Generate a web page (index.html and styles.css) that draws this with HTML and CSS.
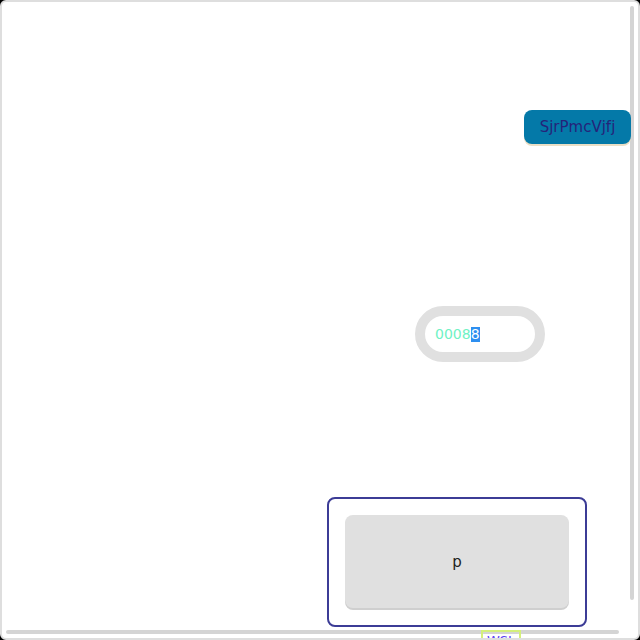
FILE: index.html
```html
<!DOCTYPE html>
<html>
<head>
<meta charset="utf-8">
<link rel="stylesheet" href="styles.css">
</head>
<body>
<div class="frame">
  <div class="bar bar-v"></div>
  <div class="bar bar-h"></div>
  <div class="content">
    <button class="action">SjrPmcVjfj</button>
    <div class="pill"><span class="val">0008</span><span class="sel">8</span></div>
    <div class="panel">
      <div class="tile">p</div>
    </div>
    <div class="tag">WSL</div>
  </div>
</div>
</body>
</html>
```
FILE: styles.css
```css
html, body {
  margin: 0;
  padding: 0;
  background: #000;
}
.frame {
  position: relative;
  box-sizing: border-box;
  width: 640px;
  height: 640px;
  border: 2px solid #dedede;
  border-radius: 6px;
  background: #fff;
  overflow: hidden;
}
.bar {
  position: absolute;
  background: #d4d4d4;
  border-radius: 2px;
}
.bar-v {
  left: 628px;
  top: 4px;
  width: 4px;
  height: 594px;
}
.bar-h {
  left: 4px;
  top: 628px;
  width: 613px;
  height: 4px;
}
.content {
  position: relative;
  z-index: 1;
  width: 628px;
  display: flex;
  flex-direction: column;
  align-items: flex-start;
}
.action {
  margin: 108px 0 0 522px;
  height: 34px;
  width: 107px;
  padding: 0;
  border: none;
  border-radius: 8px;
  background: #0479a8;
  color: #24247a;
  font-family: "DejaVu Sans", sans-serif;
  font-size: 15px;
  font-weight: 400;
  box-shadow: 0 2px 0 #eadfc6;
}
.pill {
  margin: 162px 0 0 413px;
  box-sizing: border-box;
  width: 130px;
  height: 56px;
  border: 10px solid #e0e0e0;
  border-radius: 28px;
  padding-left: 10px;
  display: flex;
  align-items: center;
  font-family: "DejaVu Sans", sans-serif;
  font-size: 14px;
  color: #6ff2c4;
}
.sel {
  background: #2e8ff0;
  color: #fff;
  line-height: 15px;
}
.panel {
  margin: 135px 0 0 325px;
  box-sizing: border-box;
  width: 260px;
  height: 130px;
  border: 2px solid #3c3c96;
  border-radius: 8px;
  padding: 16px;
}
.tile {
  height: 93px;
  border-radius: 8px;
  background: #e0e0e0;
  box-shadow: 0 2px 0 #cfcfcf;
  display: flex;
  align-items: center;
  justify-content: center;
  font-family: "DejaVu Sans", sans-serif;
  font-size: 15px;
  color: #222;
}
.tag {
  margin: 3px 0 0 479px;
  border: 2px solid #d4f07a;
  padding: 1px 4px;
  font-family: "DejaVu Sans", sans-serif;
  font-size: 13px;
  color: #5b3cf5;
}
```
